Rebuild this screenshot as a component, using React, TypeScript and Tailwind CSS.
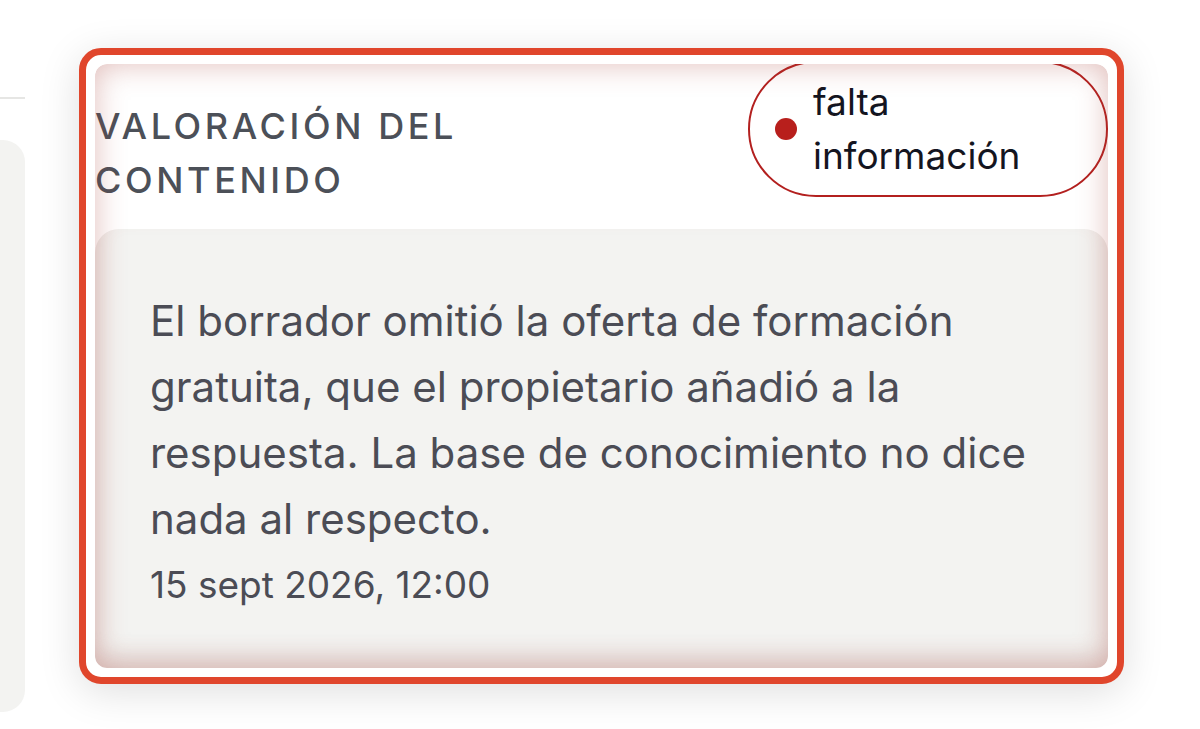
export default function App() {
  return (
    <div className="flex h-[729px] w-[1200px] overflow-hidden bg-white font-['Inter',sans-serif]">
      {/* sidebar edge */}
      <div className="flex w-[25px] shrink-0 flex-col">
        <div className="mt-[97px] h-[2px] bg-[#e6e6e4]" />
        <div className="mt-[41px] h-[572px] rounded-r-[22px] bg-[#f3f3f1]" />
      </div>

      {/* card */}
      <div className="ml-[54px] mt-[48px]">
        <div className="h-[636px] w-[1045px] rounded-[22px] border-[7px] border-[#e0462c] bg-white p-[9px] shadow-[0_8px_40px_rgba(0,0,0,0.13)]">
          <div className="relative h-full overflow-hidden rounded-[12px] bg-white">
            <div className="flex items-start justify-between">
              <h2 className="mt-[35px] text-[36px] font-medium uppercase leading-[54px] tracking-[0.1em] text-[#4c5058]">
                Valoración del
                <br />
                Contenido
              </h2>
              <div className="-mt-[3px] flex w-[360px] items-center gap-[16px] rounded-full border-2 border-[#b3201f] py-[12px] pl-[25px]">
                <span className="h-[22px] w-[22px] shrink-0 rounded-full bg-[#b81f1c]" />
                <span className="text-[37px] leading-[54px] text-[#14151f]">
                  falta
                  <br />
                  información
                </span>
              </div>
            </div>

            <div className="mt-[22px] h-[439px] rounded-t-[24px] bg-[#f3f3f1] pl-[55px] pr-[30px] pt-[59px] shadow-[inset_0_-14px_22px_rgba(150,90,80,0.12)]">
              <p className="text-[42px] leading-[66px] text-[#4b4c55]">
                El borrador omitió la oferta de formación gratuita, que el propietario añadió a la respuesta. La base de conocimiento no dice nada al respecto.
              </p>
              <p className="mt-[8px] text-[37px] leading-[50px] text-[#4b4c55]">15 sept 2026, 12:00</p>
            </div>

            <div className="pointer-events-none absolute inset-0 rounded-[12px] shadow-[inset_0_0_30px_rgba(170,70,60,0.36)]" />
          </div>
        </div>
      </div>
    </div>
  );
}
